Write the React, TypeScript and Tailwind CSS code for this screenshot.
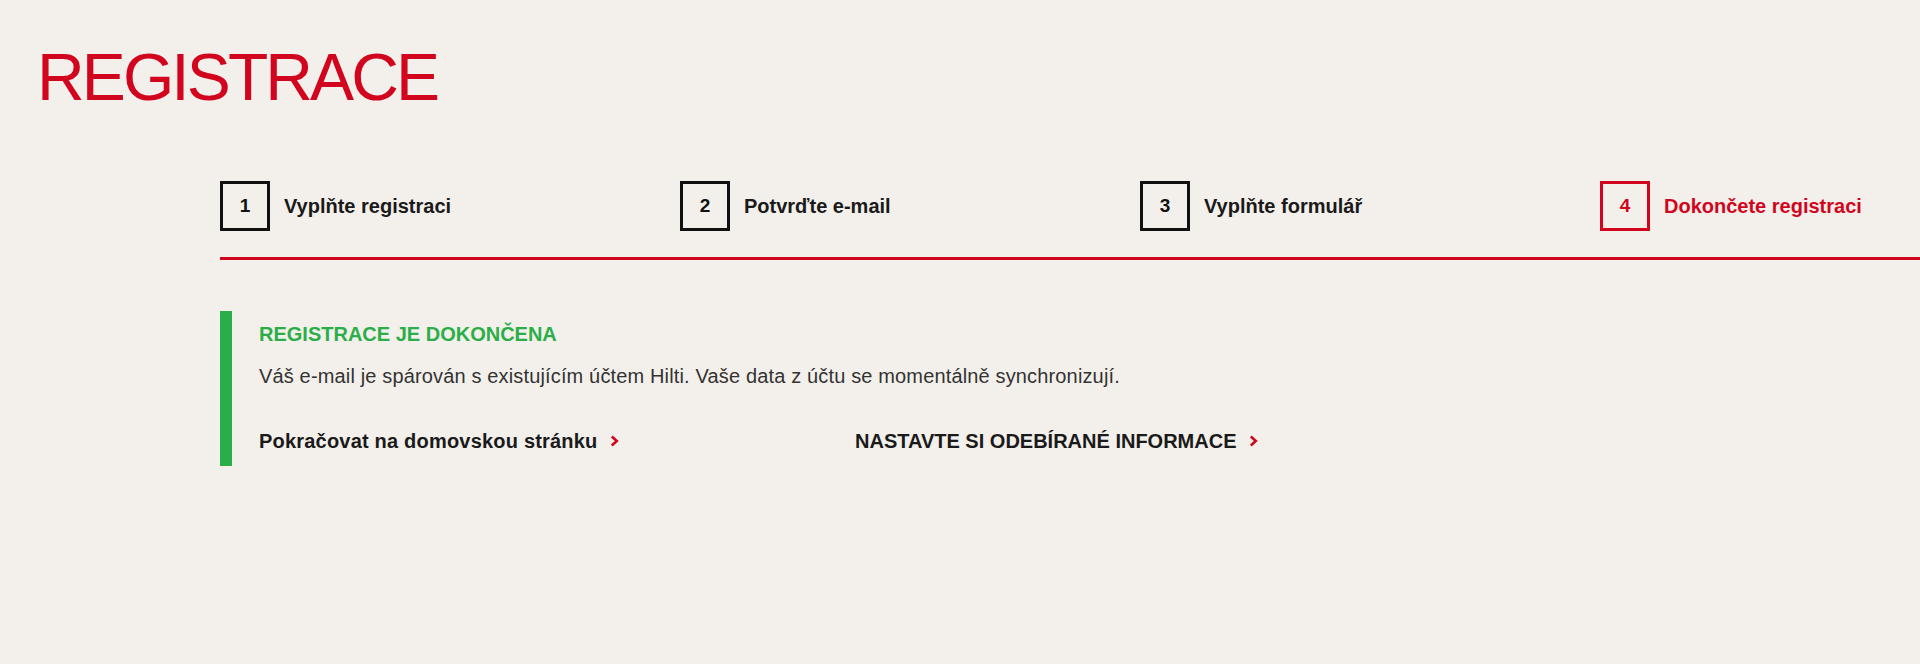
import React from "react";

const steps = [
  { n: "1", label: "Vyplňte registraci", active: false },
  { n: "2", label: "Potvrďte e-mail", active: false },
  { n: "3", label: "Vyplňte formulář", active: false },
  { n: "4", label: "Dokončete registraci", active: true },
];

function Chevron() {
  return (
    <svg width="9" height="12" viewBox="0 0 9 12" className="ml-[12px] shrink-0">
      <polyline
        points="1.8,1.5 6.8,6 1.8,10.5"
        fill="none"
        stroke="#d2051e"
        strokeWidth="2.6"
        strokeLinejoin="miter"
      />
    </svg>
  );
}

export default function App() {
  return (
    <div
      className="min-h-screen w-full overflow-hidden bg-[#f3f0eb] text-[#1d1d1d]"
      style={{ fontFamily: '"Liberation Sans", Arial, Helvetica, sans-serif' }}
    >
      <h1 className="pl-[37px] pt-[44px] text-[66px] font-normal leading-none tracking-[-2.9px] text-[#d2051e]">
        REGISTRACE
      </h1>

      <div className="ml-[220px] mt-[71px]">
        <div className="flex">
          {steps.map((s, i) => (
            <div
              key={s.n}
              className={`flex items-center ${i < 3 ? "w-[460px] shrink-0" : "flex-1"}`}
            >
              <div
                className={`flex h-[50px] w-[50px] shrink-0 items-center justify-center border-[3px] text-[19px] font-bold ${
                  s.active ? "border-[#d2051e] text-[#d2051e]" : "border-[#111] text-[#111]"
                }`}
              >
                {s.n}
              </div>
              <span
                className={`ml-[14px] text-[20px] font-bold leading-6 ${
                  s.active ? "text-[#d2051e]" : "text-[#1a1a1a]"
                }`}
              >
                {s.label}
              </span>
            </div>
          ))}
        </div>
        <div className="mt-[26px] h-[3px] w-full bg-[#d2051e]" />

        <div className="mt-[51px] flex">
          <div className="w-[12px] shrink-0 bg-[#2aae48]" />
          <div className="pl-[27px] pt-[11px] pb-[13px]">
            <div className="text-[20px] font-bold leading-6 text-[#2aae48]">
              REGISTRACE JE DOKONČENA
            </div>
            <p className="mt-[18px] text-[20px] leading-6 tracking-[0.15px] text-[#333]">
              Váš e-mail je spárován s existujícím účtem Hilti. Vaše data z účtu se momentálně synchronizují.
            </p>
            <div className="mt-[41px] flex">
              <a className="flex w-[596px] shrink-0 items-center text-[20px] font-bold leading-6 tracking-[0.2px] text-[#1a1a1a]">
                Pokračovat na domovskou stránku
                <Chevron />
              </a>
              <a className="flex items-center text-[20px] font-bold leading-6 text-[#1a1a1a]">
                NASTAVTE SI ODEBÍRANÉ INFORMACE
                <Chevron />
              </a>
            </div>
          </div>
        </div>
      </div>
    </div>
  );
}
